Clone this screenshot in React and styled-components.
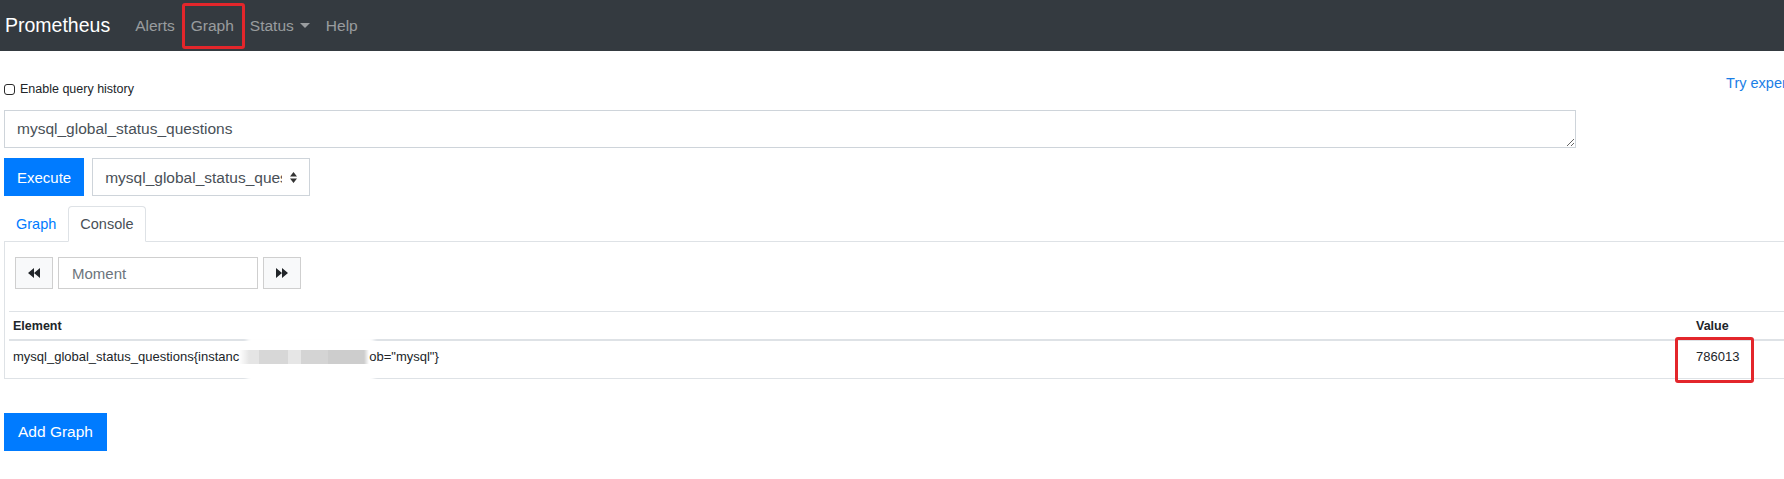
import React from 'react';
import styled, { createGlobalStyle, css } from 'styled-components';

const GlobalStyle = createGlobalStyle`
  html, body { margin: 0; padding: 0; overflow: hidden; background: #fff; }
  body { font-family: "Liberation Sans", Arial, sans-serif; color: #212529; }
  *, *::before, *::after { box-sizing: border-box; }
`;

const Page = styled.div`
  width: 1900px;
`;

const Navbar = styled.nav`
  height: 51px;
  background: #343a40;
  display: flex;
  align-items: center;
  padding: 0 5px;
`;

const Brand = styled.a`
  color: #fff;
  font-size: 19.5px;
  margin-right: 17px;
  text-decoration: none;
`;

const NavList = styled.div`
  display: flex;
  align-items: center;
  height: 100%;
`;

const redBox = css`
  position: absolute;
  border: 3px solid #e3262b;
  border-radius: 3px;
  content: '';
  pointer-events: none;
`;

const NavLink = styled.a`
  position: relative;
  display: flex;
  align-items: center;
  height: 100%;
  padding: 0 8px;
  color: rgba(255, 255, 255, 0.5);
  font-size: 15.5px;
  text-decoration: none;
  ${p => p.$marked && css`
    &::after {
      ${redBox}
      left: -1px;
      right: -3px;
      top: 3px;
      bottom: 2px;
    }
  `}
`;

const Caret = styled.svg`
  margin-left: 6px;
`;

const Main = styled.main`
  padding: 0 4px;
`;

const TopRow = styled.div`
  margin-top: 27px;
  height: 22px;
  display: flex;
  align-items: center;
  justify-content: space-between;
`;

const CheckLabel = styled.label`
  display: flex;
  align-items: center;
  gap: 5px;
  font-size: 12.5px;
  color: #212529;
`;

const Checkbox = styled.input`
  appearance: none;
  margin: 0;
  width: 11px;
  height: 11px;
  border: 1.6px solid #2b2b2b;
  border-radius: 3px;
  background: #fff;
`;

const TryLink = styled.a`
  color: #1a7ee6;
  font-size: 14.5px;
  margin-top: -12px;
  margin-right: 2px;
  text-decoration: none;
  white-space: nowrap;
`;

const QueryArea = styled.textarea`
  display: block;
  margin-top: 10px;
  width: 1572px;
  height: 38px;
  padding: 7px 12px;
  border: 1px solid #ced4da;
  border-radius: 0;
  font-family: inherit;
  font-size: 15.5px;
  line-height: 22px;
  color: #495057;
  resize: vertical;
  outline: none;
`;

const ControlsRow = styled.div`
  margin-top: 10px;
  display: flex;
  gap: 8px;
`;

const PrimaryButton = styled.button`
  height: 38px;
  padding: 0 ${p => p.$pad || 12}px;
  background: #007bff;
  border: 1px solid #007bff;
  border-radius: 0;
  color: #fff;
  font-family: inherit;
  font-size: ${p => p.$size || 15.5}px;
  cursor: pointer;
`;

const SelectWrap = styled.div`
  position: relative;
  width: 218px;
  height: 38px;
`;

const Select = styled.select`
  appearance: none;
  width: 100%;
  height: 100%;
  padding: 0 27px 0 12px;
  border: 1px solid #ced4da;
  border-radius: 0;
  background: #fff;
  font-family: inherit;
  font-size: 15.5px;
  color: #495057;
  outline: none;
`;

const SelectArrow = styled.svg`
  position: absolute;
  right: 13px;
  top: 14px;
  pointer-events: none;
`;

const TabBar = styled.div`
  margin-top: 10px;
  display: flex;
  height: 36px;
  border-bottom: 1px solid #dee2e6;
`;

const Tab = styled.a`
  display: flex;
  align-items: center;
  height: 36px;
  margin-bottom: -1px;
  padding: 0 11px;
  font-size: 14.5px;
  text-decoration: none;
  border: 1px solid transparent;
  border-radius: 4px 4px 0 0;
  color: #007bff;
  ${p => p.$active && css`
    color: #495057;
    background: #fff;
    border-color: #dee2e6 #dee2e6 #fff;
  `}
`;

const Panel = styled.div`
  border: 1px solid #dee2e6;
  border-top: none;
  padding: 15px 4px 7px;
`;

const ConsoleRow = styled.div`
  display: flex;
  gap: 5px;
  margin-left: 6px;
`;

const IconButton = styled.button`
  width: 38px;
  height: 32px;
  display: flex;
  align-items: center;
  justify-content: center;
  padding: 0;
  background: #f8f9fa;
  border: 1px solid #cfcfcf;
  border-radius: 0;
`;

const MomentInput = styled.input`
  width: 200px;
  height: 32px;
  padding: 0 13px;
  border: 1px solid #cfcfcf;
  border-radius: 0;
  font-family: inherit;
  font-size: 15px;
  color: #495057;
  outline: none;
  &::placeholder { color: #6c757d; }
`;

const Table = styled.table`
  margin-top: 22px;
  width: 100%;
  table-layout: fixed;
  border-collapse: separate;
  border-spacing: 0;
`;

const Th = styled.th`
  text-align: left;
  font-size: 12.5px;
  font-weight: bold;
  line-height: 15px;
  padding: 7px 4px 5px;
  border-top: 1px solid #dee2e6;
  border-bottom: 2px solid #dee2e6;
  color: #212529;
`;

const Td = styled.td`
  position: relative;
  font-size: 13px;
  line-height: 15px;
  padding: 8px 4px 7px;
  color: #212529;
  white-space: nowrap;
  ${p => p.$marked && css`
    &::after {
      ${redBox}
      left: -17px;
      top: -4px;
      width: 79px;
      height: 46px;
    }
  `}
`;

const Redacted = styled.span`
  position: relative;
  display: inline-block;
  width: 130px;
  height: 14px;
  vertical-align: -3px;
  &::before {
    content: '';
    position: absolute;
    left: 8px;
    right: -5px;
    top: -14px;
    bottom: -19px;
    background: #fff;
    filter: blur(2px);
    z-index: 1;
  }
  &::after {
    content: '';
    position: absolute;
    left: 0;
    right: 0;
    top: 0;
    bottom: 0;
    z-index: 2;
    background: linear-gradient(
      to right,
      rgba(235, 235, 235, 0) 0px,
      #ebebeb 8px,
      #e5e5e5 10px,
      #e5e5e5 20px,
      #d7d7d7 20px,
      #d7d7d7 49px,
      #e6e6e6 49px,
      #e6e6e6 62px,
      #d4d4d4 62px,
      #d4d4d4 89px,
      #cdcdcd 89px,
      #cdcdcd 125px,
      rgba(220, 220, 220, 0) 130px
    );
  }
`;

const AfterRedacted = styled.span`
  position: relative;
  z-index: 3;
`;

const AddRow = styled.div`
  margin-top: 34px;
`;

export default function App() {
  return (
    <Page>
      <GlobalStyle />
      <Navbar>
        <Brand href="#">Prometheus</Brand>
        <NavList>
          <NavLink href="#">Alerts</NavLink>
          <NavLink href="#" $marked>Graph</NavLink>
          <NavLink href="#">
            Status
            <Caret width="10" height="5" viewBox="0 0 10 5">
              <path d="M0 0 L10 0 L5 5 Z" fill="rgba(255,255,255,0.5)" />
            </Caret>
          </NavLink>
          <NavLink href="#">Help</NavLink>
        </NavList>
      </Navbar>
      <Main>
        <TopRow>
          <CheckLabel>
            <Checkbox type="checkbox" />
            Enable query history
          </CheckLabel>
          <TryLink href="#">Try experimental React UI</TryLink>
        </TopRow>
        <QueryArea defaultValue="mysql_global_status_questions" />
        <ControlsRow>
          <PrimaryButton $pad={12} $size={15}>Execute</PrimaryButton>
          <SelectWrap>
            <Select defaultValue="mysql_global_status_questions">
              <option value="mysql_global_status_questions">mysql_global_status_questions</option>
            </Select>
            <SelectArrow width="7" height="11" viewBox="0 0 7 11">
              <path d="M0 4.5 L3.5 0 L7 4.5 Z M0 6.5 L3.5 11 L7 6.5 Z" fill="#333" />
            </SelectArrow>
          </SelectWrap>
        </ControlsRow>
        <TabBar>
          <Tab href="#">Graph</Tab>
          <Tab href="#" $active>Console</Tab>
        </TabBar>
        <Panel>
          <ConsoleRow>
            <IconButton aria-label="previous">
              <svg width="12" height="10" viewBox="0 0 12 10">
                <path d="M6 0 L0 5 L6 10 Z M12 0 L6 5 L12 10 Z" fill="#212529" />
              </svg>
            </IconButton>
            <MomentInput placeholder="Moment" />
            <IconButton aria-label="next">
              <svg width="12" height="10" viewBox="0 0 12 10">
                <path d="M0 0 L6 5 L0 10 Z M6 0 L12 5 L6 10 Z" fill="#212529" />
              </svg>
            </IconButton>
          </ConsoleRow>
          <Table>
            <colgroup>
              <col style={{ width: '1683px' }} />
              <col />
            </colgroup>
            <thead>
              <tr>
                <Th>Element</Th>
                <Th>Value</Th>
              </tr>
            </thead>
            <tbody>
              <tr>
                <Td>
                  mysql_global_status_questions{'{'}instanc
                  <Redacted />
                  <AfterRedacted>ob="mysql"{'}'}</AfterRedacted>
                </Td>
                <Td $marked>786013</Td>
              </tr>
            </tbody>
          </Table>
        </Panel>
        <AddRow>
          <PrimaryButton $pad={13}>Add Graph</PrimaryButton>
        </AddRow>
      </Main>
    </Page>
  );
}
